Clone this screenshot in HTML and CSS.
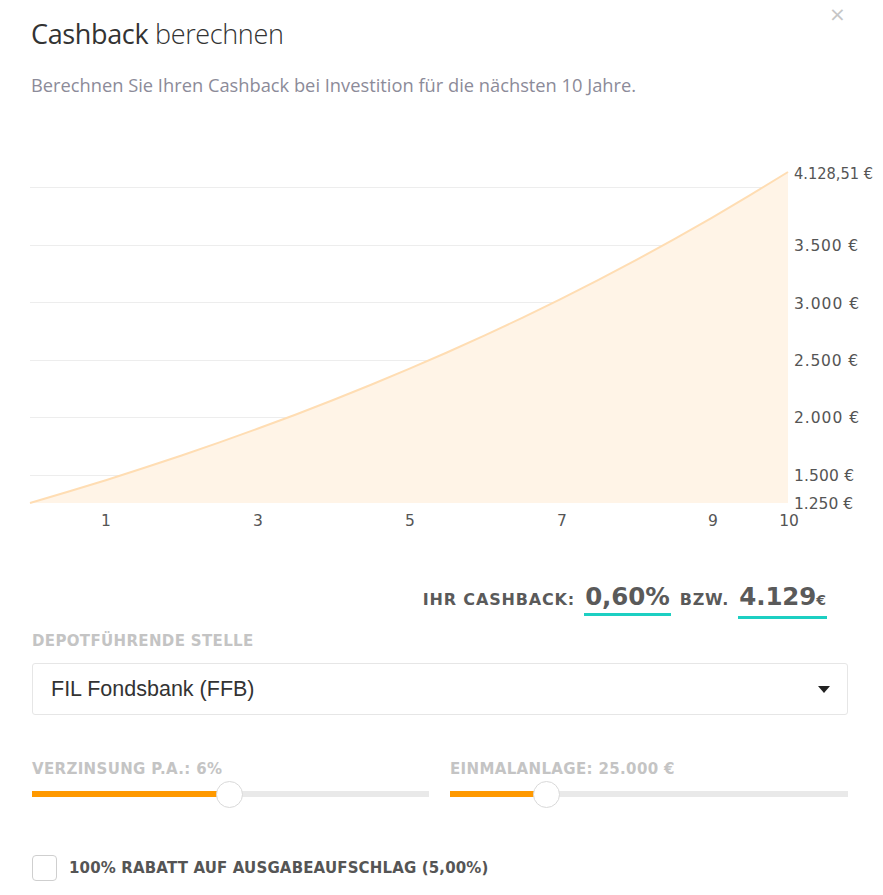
FILE: index.html
```html
<!DOCTYPE html>
<html lang="de">
<head>
<meta charset="utf-8">
<title>Cashback berechnen</title>
<link rel="stylesheet" href="styles.css">
</head>
<body>
<div class="modal">
  <button class="close" type="button" aria-label="Schließen">×</button>
  <header class="head">
    <h1 class="title"><span class="title-strong">Cashback</span> berechnen</h1>
    <p class="subtitle">Berechnen Sie Ihren Cashback bei Investition für die nächsten 10 Jahre.</p>
  </header>

  <div class="chart">
    <svg class="chart-svg" width="883" height="400" viewBox="0 140 883 400" xmlns="http://www.w3.org/2000/svg">
      <g class="grid">
        <line x1="30" x2="788" y1="187.5" y2="187.5"/>
        <line x1="30" x2="788" y1="245.5" y2="245.5"/>
        <line x1="30" x2="788" y1="302.5" y2="302.5"/>
        <line x1="30" x2="788" y1="360.5" y2="360.5"/>
        <line x1="30" x2="788" y1="417.5" y2="417.5"/>
        <line x1="30" x2="788" y1="475.5" y2="475.5"/>
      </g>
      <path class="area" d="M30 503 L67.9 491.8 L105.8 480.2 L143.7 468 L181.6 455.5 L219.5 442.4 L257.4 428.8 L295.3 414.7 L333.2 400 L371.1 384.8 L409 368.9 L446.9 352.5 L484.8 335.4 L522.7 317.6 L560.6 299.1 L598.5 279.9 L636.4 259.9 L674.3 239.2 L712.2 217.6 L750.1 195.2 L788 172 L788 503 Z"/>
      <path class="line" d="M30 503 L67.9 491.8 L105.8 480.2 L143.7 468 L181.6 455.5 L219.5 442.4 L257.4 428.8 L295.3 414.7 L333.2 400 L371.1 384.8 L409 368.9 L446.9 352.5 L484.8 335.4 L522.7 317.6 L560.6 299.1 L598.5 279.9 L636.4 259.9 L674.3 239.2 L712.2 217.6 L750.1 195.2 L788 172"/>
      <g class="ylabels">
        <text x="794" y="179" textLength="79" lengthAdjust="spacingAndGlyphs">4.128,51 €</text>
        <text x="794" y="251" textLength="64" lengthAdjust="spacing">3.500 €</text>
        <text x="794" y="309" textLength="65" lengthAdjust="spacing">3.000 €</text>
        <text x="794" y="366" textLength="64" lengthAdjust="spacing">2.500 €</text>
        <text x="794" y="423" textLength="65" lengthAdjust="spacing">2.000 €</text>
        <text x="794" y="481" textLength="60" lengthAdjust="spacing">1.500 €</text>
        <text x="794" y="509" textLength="59" lengthAdjust="spacing">1.250 €</text>
      </g>
      <g class="xlabels">
        <text x="106" y="526">1</text>
        <text x="258" y="526">3</text>
        <text x="410" y="526">5</text>
        <text x="562" y="526">7</text>
        <text x="713" y="526">9</text>
        <text x="789" y="526">10</text>
      </g>
    </svg>
  </div>

  <div class="result">
    <span class="result-label">IHR CASHBACK:</span>
    <span class="result-value">0,60%</span>
    <span class="result-label">BZW.</span>
    <span class="result-value">4.129<small class="euro">€</small></span>
  </div>

  <div class="field">
    <div class="field-label">DEPOTFÜHRENDE STELLE</div>
    <div class="select">
      <span class="select-text">FIL Fondsbank (FFB)</span>
      <span class="caret"></span>
    </div>
  </div>

  <div class="sliders">
    <div class="slider">
      <div class="field-label">VERZINSUNG P.A.: 6%</div>
      <div class="track">
        <div class="fill fill-rate"></div>
        <div class="knob"></div>
      </div>
    </div>
    <div class="slider">
      <div class="field-label">EINMALANLAGE: 25.000 €</div>
      <div class="track">
        <div class="fill fill-amount"></div>
        <div class="knob"></div>
      </div>
    </div>
  </div>

  <label class="check">
    <span class="box"></span>
    <span class="check-text">100% RABATT AUF AUSGABEAUFSCHLAG (5,00%)</span>
  </label>
</div>
</body>
</html>
```

FILE: styles.css
```css
* { box-sizing: border-box; }

html, body {
  margin: 0;
  padding: 0;
  background: #ffffff;
}

body {
  font-family: "Open Sans", "DejaVu Sans", sans-serif;
  color: #333;
}

.modal {
  position: relative;
  width: 883px;
  height: 895px;
  overflow: hidden;
}

.close {
  position: absolute;
  top: 2px;
  left: 829px;
  border: 0;
  background: none;
  padding: 0;
  font-family: "DejaVu Sans", sans-serif;
  font-size: 20px;
  line-height: 24px;
  color: #c6c6c6;
  cursor: pointer;
}

.head {
  padding: 16px 32px 0 31px;
}

.title {
  margin: 0;
  font-size: 27px;
  line-height: 36px;
  font-weight: 300;
  color: #333;
  letter-spacing: -0.35px;
}

.title-strong {
  font-weight: 400;
}

.subtitle {
  margin: 21px 0 0 0;
  font-size: 18.3px;
  line-height: 24px;
  color: #8c8b99;
}

.chart {
  margin-top: 43px;
  height: 400px;
}

.chart-svg {
  display: block;
}

.grid line {
  stroke: #ededed;
  stroke-width: 1;
}

.area {
  fill: #fff4e7;
}

.line {
  fill: none;
  stroke: #ffddb3;
  stroke-width: 2;
}

.ylabels text,
.xlabels text {
  font-family: "DejaVu Sans", sans-serif;
  font-size: 15.5px;
  fill: #555;
}

.xlabels text {
  text-anchor: middle;
}

.result {
  display: flex;
  justify-content: flex-end;
  align-items: baseline;
  gap: 9px;
  padding-right: 56px;
  margin-top: 42px;
  font-family: "DejaVu Sans", sans-serif;
  font-weight: 700;
  color: #5a5a5a;
}

.result-label {
  font-size: 16px;
  letter-spacing: 0.85px;
}

.result-value {
  font-size: 24.5px;
  line-height: 30px;
  letter-spacing: -0.1px;
  border-bottom: 3px solid #1dcfc2;
  padding: 0 1px 1px 1px;
}

.euro {
  font-size: 14px;
  font-weight: 700;
  letter-spacing: 0;
}

.field {
  padding: 0 35px 0 32px;
  margin-top: 12px;
}

.field-label {
  font-family: "DejaVu Sans", sans-serif;
  font-weight: 700;
  font-size: 15px;
  line-height: 20px;
  letter-spacing: 0.35px;
  color: #c4c4c4;
}

.select {
  margin-top: 12px;
  height: 52px;
  border: 1px solid #e6e6e6;
  border-radius: 3px;
  display: flex;
  align-items: center;
  justify-content: space-between;
  padding: 0 17px 0 18px;
}

.select-text {
  font-family: "Liberation Sans", Arial, sans-serif;
  font-size: 21.5px;
  color: #333;
}

.caret {
  width: 0;
  height: 0;
  border-left: 6px solid transparent;
  border-right: 6px solid transparent;
  border-top: 7px solid #222;
}

.sliders {
  display: grid;
  grid-template-columns: 397px 398px;
  column-gap: 21px;
  padding: 0 35px 0 32px;
  margin-top: 44px;
}

.track {
  position: relative;
  margin-top: 12px;
  height: 6px;
  background: #e9e9e9;
}

.fill {
  height: 6px;
  background: #ff9900;
}

.fill-rate { width: 197px; }
.fill-amount { width: 96px; }

.knob {
  position: absolute;
  top: -10px;
  width: 27px;
  height: 27px;
  border-radius: 50%;
  background: #fff;
  border: 1px solid #d9d9d9;
}

.slider:first-child .knob { left: 184px; }
.slider:last-child .knob { left: 83px; }

.check {
  display: flex;
  align-items: center;
  gap: 12px;
  padding-left: 32px;
  margin-top: 58px;
  cursor: pointer;
}

.box {
  width: 25px;
  height: 26px;
  border: 1px solid #cfcfcf;
  border-radius: 4px;
  background: #fff;
}

.check-text {
  font-family: "DejaVu Sans", sans-serif;
  font-weight: 700;
  font-size: 15px;
  letter-spacing: 0.15px;
  color: #555;
}
```
